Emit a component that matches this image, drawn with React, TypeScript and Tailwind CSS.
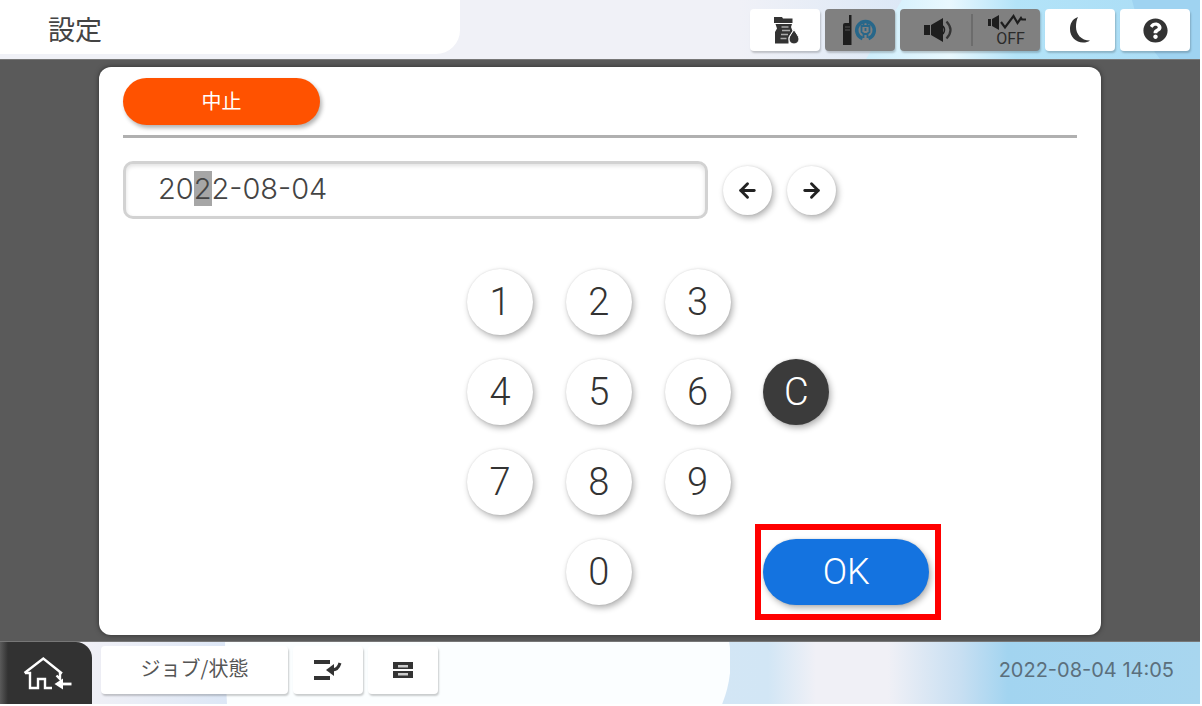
import { useEffect, useRef, useState } from "react";
import { FaQuestionCircle } from "react-icons/fa";
import { LuArrowLeft, LuArrowRight } from "react-icons/lu";

const digits = ["1", "2", "3", "4", "5", "6", "7", "8", "9", "0"];

// Grid cell of each digit, the fourth and fifth columns hold C and OK
const cells: Record<string, string> = {
  "1": "col-start-1 row-start-1",
  "2": "col-start-2 row-start-1",
  "3": "col-start-3 row-start-1",
  "4": "col-start-1 row-start-2",
  "5": "col-start-2 row-start-2",
  "6": "col-start-3 row-start-2",
  "7": "col-start-1 row-start-3",
  "8": "col-start-2 row-start-3",
  "9": "col-start-3 row-start-3",
  "0": "col-start-2 row-start-4",
};

const keyShadow = "shadow-[2px_3px_6px_rgba(0,0,0,0.3),0_0_2px_rgba(0,0,0,0.12)]";
const barButton =
  "flex items-center justify-center rounded-[4px] shadow-[1px_2px_2px_rgba(0,0,0,0.2)]";

function TonerIcon() {
  return (
    <svg width="28" height="30" viewBox="0 0 28 30" fill="#333">
      <path d="M1 1h8l1 1.500h9.500V7H1z" />
      <path d="M2.500 8H19l-1 3 1.500 4-4 6v6.500H2V16l2-3.500z" />
      <path d="M8.500 11h7M9 14.500h8M8 18.500h7M7.500 22.500h6" stroke="#aaa" strokeWidth="1.300" />
      <path d="M21 13.500c2 4 5 6.500 5 9.500a5 5 0 0 1-10 0c0-3 3-5.500 5-9.500z" stroke="#fff" />
    </svg>
  );
}

function NetworkIcon() {
  return (
    <svg width="36" height="32" viewBox="0 0 36 32">
      <path d="M1 11q0-2 2-2h4V1h2.500v30H1z" fill="#1e1e1e" />
      <path d="M3 13h5M3 16h5" stroke="#555" />
      <path d="M20.500 24.500a8.800 8.800 0 1 1 6 0" fill="none" stroke="#27678a" strokeWidth="3.500" />
      <path d="M19.500 12h8v6l-2.500 2h-3l-2.500-2zM21.500 9v3M25.500 9v3" fill="none" stroke="#27678a" strokeWidth="1.800" />
      <path d="M23.500 14v3M21.500 20v4M25.500 20v4" stroke="#27678a" strokeWidth="1.800" />
    </svg>
  );
}

function SpeakerIcon() {
  return (
    <svg width="30" height="26" viewBox="0 0 30 26" fill="#1e1e1e">
      <path d="M1 8h6v10H1zM8 8l12-7v24L8 18z" />
      <path d="M20 9q3 4 0 8" fill="none" stroke="#1e1e1e" strokeWidth="1.500" />
      <path d="M23.500 4.500q8 8.500 0 17" fill="none" stroke="#333" strokeWidth="2.200" />
    </svg>
  );
}

function NoiseIcon() {
  return (
    <svg width="40" height="17" viewBox="0 0 40 17" fill="#1e1e1e">
      <path d="M1 5h3v7H1zM5 5l7-4v15l-7-4z" />
      <path d="M14 8l4 5.500L26.500 2l4 7 3.500-5 1 1.500h4" fill="none" stroke="#1e1e1e" strokeWidth="2.200" />
    </svg>
  );
}

function MoonIcon() {
  return (
    <svg width="22" height="28" viewBox="0 0 22 28" fill="#333">
      <path d="M9 1C3 3 1 8 1 13c0 8 6 13.500 13 13.500 3 0 5-.500 7-2C12 24.500 7 18 7 11c0-4 .500-7 2-10z" />
    </svg>
  );
}

function HomeIcon() {
  return (
    <svg width="50" height="34" viewBox="0 0 50 34" fill="none" stroke="#fff" strokeWidth="2.400">
      <path d="M1.500 17L20.300 2.500L39 17.500" />
      <path d="M2 17h5v15h8V23h7v9h7M37 16v7l-3.500-3.500" />
      <path d="M38 28h10.500" strokeWidth="2.800" />
      <path d="M31.500 28l8.500-5.500v11z" fill="#fff" stroke="none" />
    </svg>
  );
}

function JobIcon() {
  return (
    <svg width="30" height="22" viewBox="0 0 30 22" fill="#333">
      <path d="M1 1h16v4H1zM1 17h16v4H1z" />
      <path d="M13 11l8-6v12z" />
      <path d="M19 11q6 0 8-7" fill="none" stroke="#333" strokeWidth="3" />
    </svg>
  );
}

function TrayIcon() {
  return (
    <svg width="22" height="18" viewBox="0 0 22 18" fill="#333">
      <path d="M1 1h20v7H1zM1 10h20v7H1z" />
      <path d="M6 4h10v2.500H6zM6 12h10v2.500H6z" fill="#ccc" />
    </svg>
  );
}

function Header() {
  return (
    <header className="relative flex h-[59px] items-start justify-between bg-[#f0f1f7]">
      {/* Blue swirl behind the status buttons */}
      <svg className="absolute top-0 right-0 h-full" width="460" viewBox="0 0 460 59" preserveAspectRatio="none">
        <defs>
          <linearGradient id="haze">
            <stop offset="0" stopColor="#f0f1f7" />
            <stop offset="1" stopColor="#d8e6f6" />
          </linearGradient>
          <linearGradient id="sky">
            <stop offset="0" stopColor="#cdeefc" />
            <stop offset=".250" stopColor="#e9f8fe" />
            <stop offset=".450" stopColor="#b3e3f8" />
            <stop offset="1" stopColor="#a9dcf5" />
          </linearGradient>
        </defs>
        <path d="M0 0h200v59H0z" fill="url(#haze)" />
        <path d="M162 0h298v59H126z" fill="url(#sky)" />
        <path d="M392 0q8 34 28 59h40V0z" fill="#9fd3f1" />
      </svg>
      <div className="relative flex h-[54px] w-[460px] items-center rounded-br-3xl bg-white pt-1 pl-12">
        <h1 className="text-[27px] leading-8 text-[#444]">設定</h1>
      </div>
      <div className="relative flex gap-[5px] pt-[9px] pr-2.5">
        <button aria-label="トナー" className={`${barButton} h-[42px] w-[70px] bg-white pt-0.5 pl-1`}>
          <TonerIcon />
        </button>
        <button aria-label="ネットワーク" className={`${barButton} h-[42px] w-[70px] bg-[#808080]`}>
          <NetworkIcon />
        </button>
        <button className={`${barButton} h-[42px] w-[140px] bg-[#808080] text-[#2a2a2a]`}>
          <span className="flex flex-1 justify-center pl-1">
            <SpeakerIcon />
          </span>
          <span className="h-8 w-0.5 bg-[#6c6c6c]" />
          <span className="flex flex-1 flex-col items-center">
            <NoiseIcon />
            <span className="pl-2 font-[Roboto,sans-serif] text-base leading-4">OFF</span>
          </span>
        </button>
        <button aria-label="スリープ" className={`${barButton} h-[42px] w-[70px] bg-white`}>
          <MoonIcon />
        </button>
        <button aria-label="ヘルプ" className={`${barButton} h-[42px] w-[70px] bg-white`}>
          <FaQuestionCircle size={25} color="#333" />
        </button>
      </div>
    </header>
  );
}

function Footer() {
  return (
    <footer className="relative flex h-[62px] bg-[linear-gradient(90deg,#f0f0f6_90px,#dde7f6_225px,#d2e6f5_64%,#f0f0f6_68%,#f0f0f6_74%,#c8dff2_80%,#a2d4f0_84%,#a8d6ef)]">
      <svg className="absolute top-0 left-[18.750%] h-full w-[42.100%]" viewBox="0 0 505 62" preserveAspectRatio="none">
        <path d="M0 0h504q5 32-7 62H2q-2-30-2-62z" fill="#fbfeff" />
      </svg>
      <button
        aria-label="ホーム"
        className="relative flex w-[92px] items-center justify-center rounded-tr-2xl bg-[linear-gradient(90deg,#5a5a5a,#323232_8px)] pl-1"
      >
        <HomeIcon />
      </button>
      <nav className="relative ml-[9px] flex gap-[5px] pt-1">
        <button className={`${barButton} h-12 w-[187px] bg-white pb-1 text-xl text-[#555]`}>
          ジョブ/状態
        </button>
        <button aria-label="ジョブ割り込み" className={`${barButton} h-12 w-[70px] bg-white`}>
          <JobIcon />
        </button>
        <button aria-label="給紙トレイ" className={`${barButton} h-12 w-[70px] bg-white`}>
          <TrayIcon />
        </button>
      </nav>
      <time
        dateTime="2022-08-04T14:05"
        className="relative ml-auto pt-4 pr-[26px] font-[Inter,sans-serif] text-xl leading-6 text-[#5b6f7c]"
      >
        2022-08-04 14:05
      </time>
    </footer>
  );
}

export default function App() {
  const [value, setValue] = useState("2022-08-04");
  const [pos, setPos] = useState(2);
  const inputRef = useRef<HTMLInputElement>(null);

  useEffect(() => {
    inputRef.current?.focus();
    inputRef.current?.setSelectionRange(pos, pos + 1);
  }, [pos, value]);

  // The cursor steps over the two separators
  const move = (step: number) => {
    let next = pos + step;
    if (value[next] === "-") next += step;
    if (next >= 0 && next < value.length) setPos(next);
  };

  const enter = (digit: string) => {
    setValue(value.slice(0, pos) + digit + value.slice(pos + 1));
    move(1);
  };

  const clear = () => {
    setValue("0000-00-00");
    setPos(0);
  };

  return (
    <div className="bg-white pr-0.5 pb-0.5 font-['Noto_Sans_CJK_JP',sans-serif]">
      <Header />
      <main className="border-y border-[#777] bg-[#5a5a5a] px-[99px] pt-[7px] pb-[6px]">
        <section className="rounded-xl bg-white px-6 pt-[11px] pb-[30px] shadow-[0_0_5px_rgba(0,0,0,0.5)]">
          <button className="h-[47px] w-[197px] rounded-full bg-[#ff5200] pb-0.5 text-xl text-white shadow-[2px_3px_4px_rgba(0,0,0,0.3)]">
            中止
          </button>
          <hr className="mt-2.5 border-t-3 border-[#b0b0b0]" />

          <div className="mt-[23px] flex items-center gap-[15px]">
            <input
              ref={inputRef}
              aria-label="日付"
              value={value}
              readOnly
              className="h-[58px] w-[585px] rounded-[10px] border-3 border-[#d2d2d2] pb-1 pl-8 font-[Inter,sans-serif] text-[29px] leading-8 font-light text-[#444] shadow-[inset_0_2px_4px_rgba(0,0,0,0.12)] outline-none selection:bg-[#a6a6a6] selection:text-[#444]"
            />
            <button
              aria-label="左へ"
              onClick={() => move(-1)}
              className={`flex size-[49px] items-center justify-center rounded-full bg-white ${keyShadow}`}
            >
              <LuArrowLeft size={23} strokeWidth={3} color="#222" />
            </button>
            <button
              aria-label="右へ"
              onClick={() => move(1)}
              className={`flex size-[49px] items-center justify-center rounded-full bg-white ${keyShadow}`}
            >
              <LuArrowRight size={23} strokeWidth={3} color="#222" />
            </button>
          </div>

          {/* Keypad */}
          <div className="mt-[50px] ml-[344px] grid w-[462px] grid-cols-5 gap-x-8 gap-y-6 font-[Roboto,sans-serif] text-[38px] leading-10">
            {digits.map((digit) => (
              <button
                key={digit}
                onClick={() => enter(digit)}
                className={`${cells[digit]} size-[66px] rounded-full bg-white font-light text-[#333] ${keyShadow}`}
              >
                {digit}
              </button>
            ))}
            <button
              onClick={clear}
              className={`col-start-4 row-start-2 size-[66px] rounded-full bg-[#3b3b3b] font-light text-white ${keyShadow}`}
            >
              C
            </button>
            <div className="relative col-span-2 col-start-4 row-start-4 h-[66px]">
              <button className={`h-full w-full rounded-full bg-[#1473e0] text-4xl font-light text-white ${keyShadow}`}>
                OK
              </button>
              <div className="pointer-events-none absolute -top-[15px] -right-3 -bottom-[15px] -left-2 border-6 border-[#f00]" />
            </div>
          </div>
        </section>
      </main>
      <Footer />
    </div>
  );
}
